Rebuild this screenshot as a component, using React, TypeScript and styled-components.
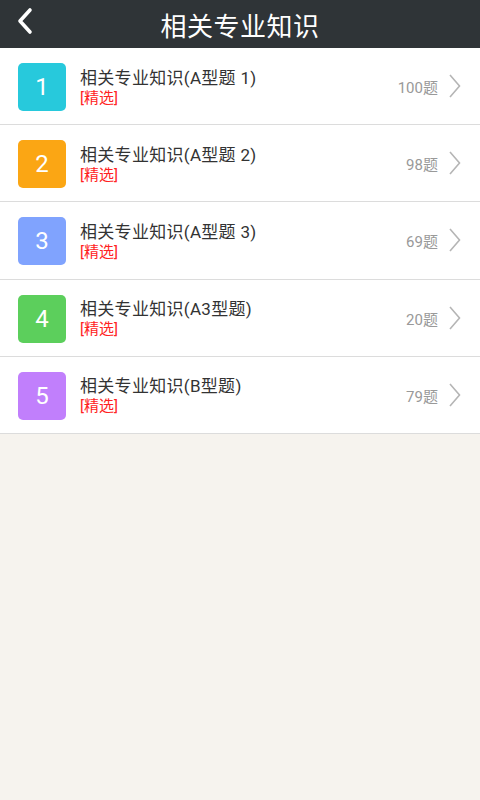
import React from 'react';
import styled, { createGlobalStyle } from 'styled-components';

const GlobalStyle = createGlobalStyle`
  html, body {
    margin: 0;
    padding: 0;
    background: #f6f3ee;
    font-family: Roboto, "Noto Sans CJK SC", sans-serif;
  }
  #root {
    min-height: 800px;
  }
`;

type Chapter = {
  num: number;
  title: string;
  count: number;
  color: string;
};

const chapters: Chapter[] = [
  { num: 1, title: '相关专业知识(A型题 1)', count: 100, color: '#27c9dc' },
  { num: 2, title: '相关专业知识(A型题 2)', count: 98, color: '#fba614' },
  { num: 3, title: '相关专业知识(A型题 3)', count: 69, color: '#80a3fe' },
  { num: 4, title: '相关专业知识(A3型题)', count: 20, color: '#5ccf5c' },
  { num: 5, title: '相关专业知识(B型题)', count: 79, color: '#c17ffc' },
];

const Page = styled.div`
  min-height: 800px;
  background: #f6f3ee;
`;

const Header = styled.header`
  height: 48px;
  background: #2f3437;
  display: flex;
  align-items: center;
  justify-content: center;
  position: relative;
`;

const BackButton = styled.button`
  position: absolute;
  left: 12px;
  top: 6px;
  width: 26px;
  height: 30px;
  padding: 0;
  border: none;
  background: none;
  display: flex;
  align-items: center;
  justify-content: center;
`;

const Title = styled.h1`
  margin: 0;
  color: #fff;
  font-size: 26px;
  font-weight: 400;
  letter-spacing: 0.5px;
`;

const List = styled.ul`
  margin: 0;
  padding: 0;
  list-style: none;
  background: #fff;
`;

const Row = styled.li`
  height: 76.2px;
  border-bottom: 1px solid #dcdcdc;
  display: flex;
  align-items: center;
  padding: 0 18px;
`;

const Badge = styled.div<{ $color: string }>`
  width: 48px;
  height: 48px;
  border-radius: 5px;
  background: ${(p) => p.$color};
  color: #fff;
  font-size: 24px;
  display: flex;
  align-items: center;
  justify-content: center;
  flex-shrink: 0;
  margin-top: 2px;
`;

const TextBlock = styled.div`
  flex: 1;
  margin-left: 14px;
  display: flex;
  flex-direction: column;
  margin-top: 2px;
`;

const ItemTitle = styled.div`
  font-size: 17px;
  color: #333;
  line-height: 22px;
  letter-spacing: 0.3px;
`;

const Tag = styled.div`
  font-size: 15px;
  color: #f22;
  line-height: 19px;
`;

const Count = styled.div`
  font-size: 15px;
  color: #999;
  margin-right: 10px;
  margin-top: 1px;
`;

const BackIcon = () => (
  <svg width="20" height="28" viewBox="0 0 20 28">
    <path d="M15 3 L5 14 L15 25" fill="none" stroke="#fff" strokeWidth="3.6" strokeLinecap="round" strokeLinejoin="round" />
  </svg>
);

const Chevron = () => (
  <svg width="14" height="26" viewBox="0 0 14 26">
    <path d="M2 2 L11.5 13 L2 24" fill="none" stroke="#b5b5b5" strokeWidth="1.6" />
  </svg>
);

export default function App() {
  return (
    <Page>
      <GlobalStyle />
      <Header>
        <BackButton aria-label="返回">
          <BackIcon />
        </BackButton>
        <Title>相关专业知识</Title>
      </Header>
      <List>
        {chapters.map((c) => (
          <Row key={c.num}>
            <Badge $color={c.color}>{c.num}</Badge>
            <TextBlock>
              <ItemTitle>{c.title}</ItemTitle>
              <Tag>[精选]</Tag>
            </TextBlock>
            <Count>{c.count}题</Count>
            <Chevron />
          </Row>
        ))}
      </List>
    </Page>
  );
}
